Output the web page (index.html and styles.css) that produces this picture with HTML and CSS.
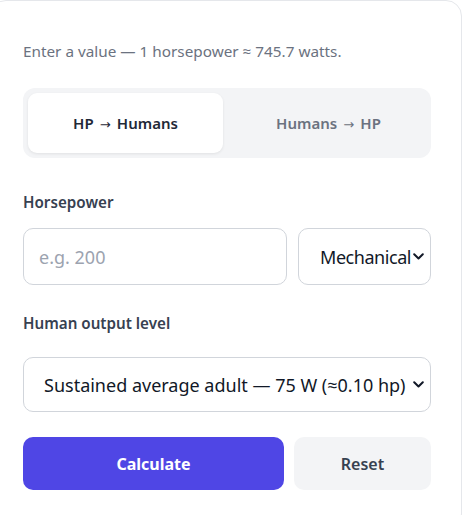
FILE: index.html
```html
<!DOCTYPE html>
<html lang="en">
<head>
<meta charset="utf-8">
<title>HP to Humans</title>
<link rel="stylesheet" href="styles.css">
</head>
<body>
<div class="card">
  <p class="intro">Enter a value — 1 horsepower ≈ 745.7 watts.</p>
  <div class="toggle">
    <button class="tab tab-active" type="button">HP<span class="arrow"> → </span>Humans</button>
    <button class="tab" type="button">Humans<span class="arrow"> → </span>HP</button>
  </div>
  <label class="label label-hp" for="hp">Horsepower</label>
  <div class="row">
    <input class="field" id="hp" type="text" placeholder="e.g. 200">
    <select class="field select select-unit">
      <option>Mechanical</option>
      <option>Metric</option>
      <option>Electrical</option>
    </select>
  </div>
  <label class="label label-level" for="level">Human output level</label>
  <select class="field select select-level" id="level">
    <option>Sustained average adult — 75 W (≈0.10 hp)</option>
  </select>
  <div class="actions">
    <button class="btn btn-primary" type="button">Calculate</button>
    <button class="btn btn-secondary" type="button">Reset</button>
  </div>
</div>
</body>
</html>
```
FILE: styles.css
```css
html, body {
  margin: 0;
  padding: 0;
  background: #ffffff;
  overflow: hidden;
}
body {
  font-family: "Noto Sans", "Open Sans", sans-serif;
  color: #111827;
}
.card {
  box-sizing: border-box;
  width: 472px;
  margin-left: -10px;
  height: 530px;
  border: 1px solid #e5e7eb;
  border-radius: 16px;
  background: #fff;
  padding: 40px 30px 0 32px;
}
.intro {
  margin: 0;
  font-size: 15.3px;
  line-height: 20px;
  color: #6b7280;
}
.toggle {
  margin-top: 27px;
  display: grid;
  grid-template-columns: 1fr 1fr;
  gap: 8px;
  padding: 5px;
  background: #f3f4f6;
  border-radius: 12px;
}
.tab {
  height: 60px;
  border: 0;
  border-radius: 9px;
  background: transparent;
  font-family: inherit;
  font-size: 15px;
  font-weight: 600;
  color: #6b7280;
}
.arrow {
  font-family: "DejaVu Sans", sans-serif;
  font-weight: 400;
  font-size: 13px;
  white-space: pre;
  margin: 0 2px;
}
.tab-active {
  background: #fff;
  color: #1f2937;
  box-shadow: 0 1px 3px rgba(0, 0, 0, 0.08);
}
.label {
  display: block;
  font-size: 15.2px;
  line-height: 20px;
  font-weight: 600;
  color: #374151;
}
.label-hp {
  margin-top: 34px;
}
.row {
  margin-top: 16px;
  display: grid;
  grid-template-columns: minmax(0, 1fr) 133px;
  gap: 11px;
}
.field {
  box-sizing: border-box;
  height: 57px;
  min-width: 0;
  width: 100%;
  border: 1px solid #d1d5db;
  border-radius: 10px;
  background-color: #fff;
  font-family: inherit;
  font-size: 18px;
  color: #111827;
  padding: 0 15px;
  outline: none;
}
.field::placeholder {
  color: #9ca3af;
}
.select {
  -webkit-appearance: none;
  appearance: none;
  background-image: url("data:image/svg+xml,%3Csvg xmlns='http://www.w3.org/2000/svg' width='11' height='7' viewBox='0 0 11 7'%3E%3Cpath d='M1.2 1.2 L5.5 5.5 L9.8 1.2' fill='none' stroke='%23111827' stroke-width='2' stroke-linecap='round' stroke-linejoin='round'/%3E%3C/svg%3E");
  background-repeat: no-repeat;
  background-size: 11px 7px;
  background-position: right 6px center;
}
.select-unit {
  padding: 0 0 0 21px;
  letter-spacing: -0.45px;
}
.label-level {
  margin-top: 28px;
}
.select-level {
  display: block;
  height: 55px;
  margin-top: 24px;
  padding: 0 24px 0 20px;
}
.actions {
  margin-top: 25px;
  display: grid;
  grid-template-columns: minmax(0, 1fr) 137px;
  gap: 10px;
}
.btn {
  height: 53px;
  border: 0;
  border-radius: 10px;
  font-family: inherit;
  font-size: 16px;
  font-weight: 700;
}
.btn-primary {
  background: #4f46e5;
  color: #fff;
}
.btn-secondary {
  background: #f3f4f6;
  color: #374151;
  font-weight: 600;
}
```
